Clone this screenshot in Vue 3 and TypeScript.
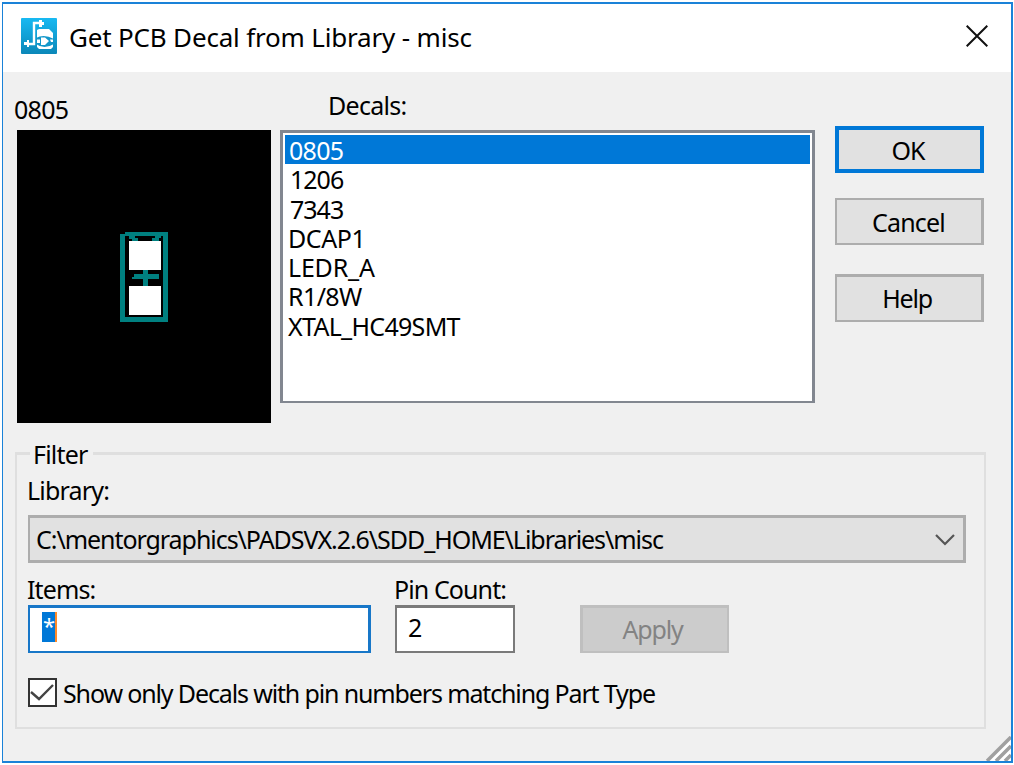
<script setup lang="ts">
import { ref } from 'vue'

interface Decal {
  name: string
  fit: string
}

const decals: Decal[] = [
  { name: '0805', fit: 'digits' },
  { name: '1206', fit: 'digits inset' },
  { name: '7343', fit: 'digits inset' },
  { name: 'DCAP1', fit: 'dcap' },
  { name: 'LEDR_A', fit: 'ledr' },
  { name: 'R1/8W', fit: 'r18' },
  { name: 'XTAL_HC49SMT', fit: 'xtal' },
]
const selected = ref('0805')
const libraryPath = 'C:\\mentorgraphics\\PADSVX.2.6\\SDD_HOME\\Libraries\\misc'
const matchPins = ref(true)
</script>

<template>
  <main class="dialog">
    <header class="titlebar">
      <svg class="app-icon" viewBox="0 0 36 36">
        <defs>
          <linearGradient id="iconFill" x1="0" y1="0" x2="0" y2="1">
            <stop offset="0" stop-color="#18b9f2" />
            <stop offset="1" stop-color="#0b87b8" />
          </linearGradient>
        </defs>
        <rect width="36" height="36" rx="1" fill="url(#iconFill)" />
        <path d="M19 5H13V26H7" fill="none" stroke="#fff" stroke-width="2.4" />
        <path d="M18 2H21V4H23V7H21V9H18ZM8 22H6V24H3V27H6V29H8Z" fill="#fff" />
        <path d="M16 12L18 11H28L32 15V29L30 31H18L16 29Z" fill="#fff" />
        <path d="M15 20Q23 15.500 33 21V26Q23 32 15 26Z" fill="#1297ca" />
        <path d="M16 21.500H19V25H16ZM20 19.500H24L28 23L24 27H20ZM29 21.500H32V24H30Z" fill="#fff" />
      </svg>
      <h1 class="title">Get PCB Decal from Library - misc</h1>
      <svg class="close" viewBox="0 0 22 22">
        <path d="M.7.7L21.3 21.3M21.3.7L.7 21.3" stroke="#111" stroke-width="2" />
      </svg>
    </header>

    <section class="upper">
      <div class="preview-col">
        <div class="label digits">0805</div>
        <svg class="preview" viewBox="0 0 254 293">
          <rect width="254" height="293" fill="#000" />
          <path d="M103 104H108V102H151V192H103Z" fill="#008080" />
          <path d="M108 106H146V187H108Z" fill="#000" />
          <path d="M112 106H118V108H121V111H115V109H112ZM135 111V108H138V106H144V108H142V111Z" fill="#008080" />
          <path d="M112 111H144V140H112ZM112 156H144V185H112Z" fill="#fff" />
          <path d="M126 140H131V144H142V149H131V156H126V149H115V147H117V144H126Z" fill="#008080" />
        </svg>
      </div>

      <div class="list-col">
        <div class="label decals-label">Decals:</div>
        <ul class="listbox">
          <li
            v-for="decal in decals"
            :key="decal.name"
            :class="{ selected: decal.name === selected }"
            @click="selected = decal.name"
          ><span :class="decal.fit">{{ decal.name }}</span></li>
        </ul>
      </div>

      <div class="actions">
        <button class="btn primary">OK</button>
        <button class="btn cancel">Cancel</button>
        <button class="btn help">Help</button>
      </div>
    </section>

    <section class="filter">
      <div class="legend-row">
        <i class="rule lead"></i>
        <span class="label legend">Filter</span>
        <i class="rule rest"></i>
      </div>
      <div class="filter-body">
        <div class="label library-label">Library:</div>
        <div class="combo">
          <span class="path">{{ libraryPath }}</span>
          <svg class="chevron" viewBox="0 0 20 12">
            <path d="M1 1L10 10L19 1" fill="none" stroke="#555" stroke-width="2.2" />
          </svg>
        </div>
        <div class="fields">
          <div class="items-field">
            <div class="label items-label">Items:</div>
            <div class="input focused"><span class="selection">*</span></div>
          </div>
          <div class="pin-field">
            <div class="label pin-label">Pin Count:</div>
            <div class="input pin-input">2</div>
          </div>
          <button class="btn apply" disabled>Apply</button>
        </div>
        <div class="check-row" @click="matchPins = !matchPins">
          <span class="checkbox">
            <svg v-if="matchPins" viewBox="0 0 25 25">
              <path d="M1 12L9 19L23 5" fill="none" stroke="#444" stroke-width="2.4" />
            </svg>
          </span>
          <span class="label check-text">Show only Decals with pin numbers matching Part Type</span>
        </div>
      </div>
    </section>

    <svg class="grip" viewBox="0 0 25 25">
      <path d="M-1 25L25 -1V25Z" fill="#fff" />
      <path d="M1 25L25 1M10 25L25 10M19 25L25 19" stroke="#a0a0a0" stroke-width="3.6" />
    </svg>
  </main>
</template>

<style>
body {
  background: #fff;
  overflow: hidden;
}
</style>

<style scoped>
* {
  box-sizing: border-box;
}
.dialog {
  position: relative;
  width: 1011px;
  height: 761px;
  margin: 2px 0 0 2px;
  border: 2px solid #1a82d8;
  border-left-width: 1px;
  background: #f0f0f0;
  color: #000;
  font: 25px/30px "Noto Sans", "Open Sans", sans-serif;
  white-space: nowrap;
}
.titlebar {
  display: flex;
  height: 68px;
  background: #fff;
}
.app-icon {
  width: 36px;
  height: 36px;
  margin: 14px 0 0 18px;
}
.title {
  flex: 1;
  margin: 15px 0 0 12px;
  font-size: 26px;
  line-height: 36px;
  font-weight: 400;
  letter-spacing: -0.18px;
}
.close {
  width: 22px;
  height: 22px;
  margin: 21px 23px 0 0;
}
.label {
  height: 30px;
  letter-spacing: -0.7px;
}
.upper {
  display: flex;
  height: 380px;
  padding-left: 14px;
}
.preview-col {
  width: 254px;
}
.preview-col .label {
  margin: 22px 0 6px -3px;
}
.preview {
  display: block;
  width: 254px;
  height: 293px;
}
.list-col {
  width: 535px;
  margin-left: 9px;
}
.decals-label {
  margin: 18px 0 10px 48px;
}
.listbox {
  height: 273px;
  margin: 0;
  padding: 2px;
  border: 3px solid #828790;
  border-bottom-width: 2px;
  background: #fff;
  list-style: none;
}
.listbox li {
  height: 29.3px;
  padding-left: 3px;
  line-height: 30px;
}
.listbox li.selected {
  background: #0078d7;
  color: #fff;
}
.digits {
  letter-spacing: -0.7px;
}
.listbox .digits {
  margin-left: 1px;
}
.listbox .inset {
  margin-left: 2px;
  letter-spacing: -1px;
}
.dcap {
  letter-spacing: -0.4px;
}
.ledr {
  letter-spacing: -0.2px;
}
.r18 {
  letter-spacing: -0.6px;
}
.xtal {
  letter-spacing: -0.7px;
}
.actions {
  display: flex;
  flex-direction: column;
  width: 149px;
  margin: 54px 0 0 20px;
}
.btn {
  width: 149px;
  height: 47px;
  padding: 0 3px 0 0;
  border: 2px solid #adadad;
  border-right-width: 3px;
  background: #e1e1e1;
  color: #000;
  font: inherit;
  letter-spacing: -0.9px;
}
.primary {
  border: 4px solid #0078d7;
}
.cancel {
  margin-top: 25px;
  padding-right: 1px;
  letter-spacing: -0.8px;
}
.help {
  height: 48px;
  margin-top: 29px;
  padding: 0 4px 2px 0;
  border-top-width: 3px;
  letter-spacing: -1.2px;
}
.filter {
  width: 971px;
  height: 277px;
  margin-left: 12px;
}
.legend-row {
  display: flex;
  height: 3px;
}
.rule {
  height: 3px;
  background: #dfdfdf;
}
.lead {
  width: 15px;
}
.legend {
  width: 63px;
  margin-top: -13px;
  padding-left: 3px;
  letter-spacing: -0.8px;
}
.rest {
  flex: 1;
}
.filter-body {
  height: 274px;
  padding: 20px 0 0 11px;
  border: 2px solid #dfdfdf;
  border-top: 0;
}
.library-label {
  margin-left: -1px;
  letter-spacing: -0.8px;
}
.combo {
  display: flex;
  width: 938px;
  height: 48px;
  margin-top: 10px;
  padding: 6px 8px 0 6px;
  border: 3px solid #adadad;
  border-left-width: 2px;
  background: #e1e1e1;
}
.path {
  flex: 1;
  letter-spacing: -1.05px;
}
.chevron {
  width: 20px;
  height: 12px;
  margin-top: 10px;
}
.fields {
  display: flex;
  height: 90px;
  padding-top: 11px;
}
.items-field {
  width: 343px;
  margin-right: 24px;
}
.items-label {
  margin: 0 0 1px -1px;
  letter-spacing: -0.9px;
}
.pin-field {
  width: 120px;
  margin-right: 65px;
}
.pin-label {
  margin: 0 0 1px -1px;
  letter-spacing: -0.9px;
}
.input {
  height: 48px;
  border: 2px solid #7a7a7a;
  border-top-width: 3px;
  background: #fff;
}
.focused {
  padding: 4px 0 0 12px;
  border-color: #1877c8;
  border-right-width: 3px;
}
.selection {
  display: block;
  width: 15px;
  height: 30px;
  padding-left: 1px;
  border-right: 2px solid #ff8a28;
  background: #0078d7;
  color: #fff;
  font-size: 22px;
  line-height: 26px;
}
.pin-input {
  padding: 4px 0 0 11px;
}
.apply {
  height: 48px;
  margin-top: 31px;
  padding: 0 5px 2px 0;
  border-color: #bfbfbf;
  border-width: 3px 2px 2px 3px;
  background: #ccc;
  color: #838383;
  letter-spacing: -1.2px;
}
.check-row {
  display: flex;
  margin-top: 25px;
}
.checkbox {
  width: 29px;
  height: 29px;
  margin-right: 6px;
  border: 2px solid #333;
  background: #fff;
}
.checkbox svg {
  display: block;
  width: 25px;
  height: 25px;
}
.check-text {
  letter-spacing: -1.14px;
}
.grip {
  position: absolute;
  right: 0;
  bottom: 0;
  width: 25px;
  height: 25px;
}
</style>
